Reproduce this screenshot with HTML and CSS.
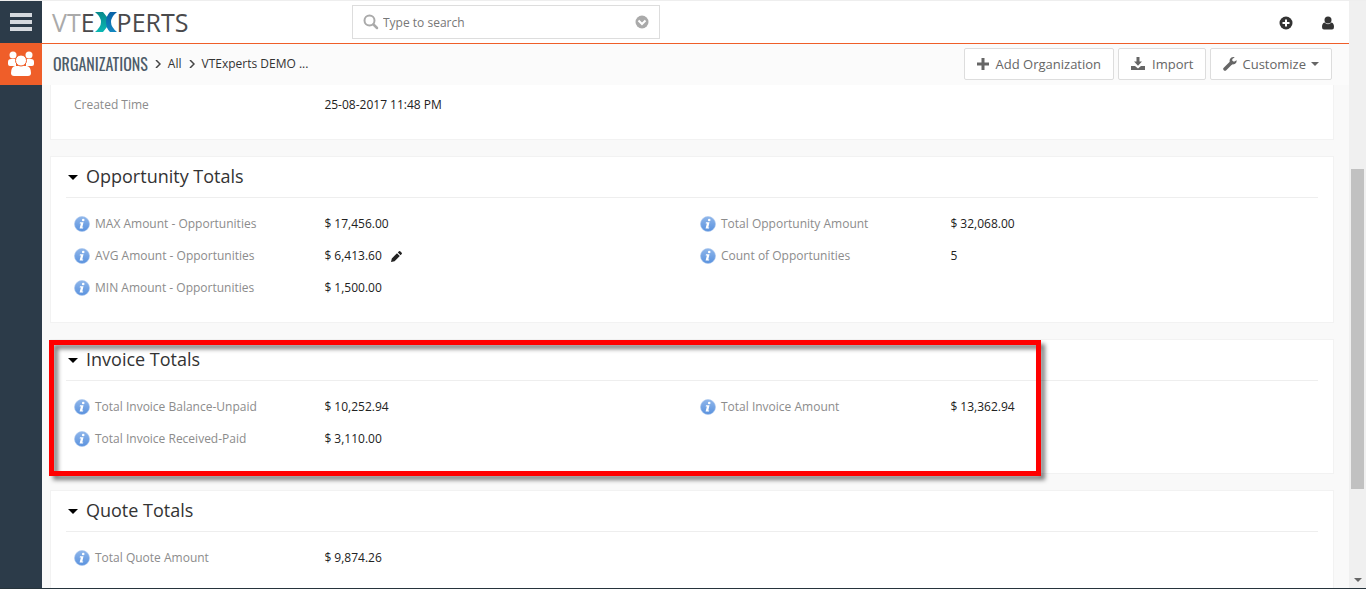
FILE: index.html
```
<!DOCTYPE html>
<html lang="en">
<head>
    <meta charset="UTF-8">
    <meta name="viewport" content="width=device-width, initial-scale=1.0">
    <title>Organizations - VTExperts</title>
    <link rel="stylesheet" href="styles.css">
</head>
<body>
    <!-- shared icons -->
    <svg class="sprite" aria-hidden="true">
        <defs>
            <linearGradient id="infoFill" x1="0" y1="0" x2="0" y2="1">
                <stop offset="0" stop-color="#8fb6ea"/>
                <stop offset="1" stop-color="#5a92de"/>
            </linearGradient>
            <linearGradient id="teal" x1="0" y1="0" x2="0" y2="1">
                <stop offset="0" stop-color="#078a8c"/>
                <stop offset="1" stop-color="#0bb8b4"/>
            </linearGradient>
            <linearGradient id="blue" x1="0" y1="0" x2="0" y2="1">
                <stop offset="0" stop-color="#0a62a6"/>
                <stop offset="1" stop-color="#1387c0"/>
            </linearGradient>
        </defs>
        <symbol id="info" viewBox="0 0 16 16">
            <circle cx="8" cy="8" r="7.5" fill="url(#infoFill)" stroke="#a9c6ee" stroke-width=".6"/>
            <circle cx="9.2" cy="4" r="1.3" fill="#fff"/>
            <path d="M6 6.300h3.500L8.300 11.400h1l-.3 1.200H5.600L6.900 7.500H5.700z" fill="#fff"/>
        </symbol>
    </svg>

    <div class="app">
        <nav class="sidebar">
            <button class="menu-btn" type="button" aria-label="Menu">
                <svg width="22" height="18" viewBox="0 0 22 18"><path d="M0 0h22v4H0zM0 7h22v4H0zM0 14h22v4H0z" fill="#d5d9de"/></svg>
            </button>
            <a class="module" href="#" aria-label="Organizations">
                <svg width="26" height="26" viewBox="0 0 26 26" fill="#fff">
                    <circle cx="5" cy="4" r="3.500"/>
                    <circle cx="21" cy="4" r="3.500"/>
                    <path d="M0 13V11Q0 8 3 8h4q1 0 1 1v6H2q-2 0-2-2zM26 13V11q0-3-3-3h-4q-1 0-1 1v6h6q2 0 2-2z"/>
                    <path d="M7 15Q3 16 3 22q0 3 3 3h14q3 0 3-3 0-6-4-7z"/>
                    <circle cx="13" cy="9.500" r="5.500" stroke="#ef5e29"/>
                </svg>
            </a>
        </nav>

        <div class="main">
            <header class="topbar">
                <a class="logo" href="#" aria-label="VTExperts"><span class="fade">VT</span><span>E</span><svg width="22" height="20" viewBox="0 0 22 20"><path d="M0 0h8l4 5v10l-4 5H0q6-5 6-10T0 0z" fill="url(#teal)"/><path d="M22 0h-7q-4 4-4 10t4 10h7q-6-5-6-10t6-10z" fill="url(#blue)"/></svg><span>PERTS</span></a>
                <form class="search">
                    <svg width="16" height="16" viewBox="0 0 16 16"><path d="M10.500 10.500L14 14" stroke="#aaa" stroke-width="2.500" stroke-linecap="round"/><circle cx="6.500" cy="6.500" r="5" fill="none" stroke="#aaa" stroke-width="2"/></svg>
                    <input type="text" placeholder="Type to search" aria-label="Search">
                    <button type="button" aria-label="Advanced search">
                        <svg width="14" height="14" viewBox="0 0 14 14"><circle cx="7" cy="7" r="6.500" fill="#aaa"/><path d="M3.500 5.500L7 9l3.500-3.500" fill="none" stroke="#fff" stroke-width="2"/></svg>
                    </button>
                </form>
                <div class="tools">
                    <button type="button" aria-label="Quick create">
                        <svg width="14" height="14" viewBox="0 0 14 14"><circle cx="7" cy="7" r="6.500" fill="#333"/><path d="M7 3.500v7M3.500 7h7" stroke="#fff" stroke-width="2"/></svg>
                    </button>
                    <button type="button" aria-label="User">
                        <svg width="14" height="14" viewBox="0 0 14 14" fill="#333"><circle cx="7" cy="4" r="3.500"/><path d="M3.500 6.500Q7 10 10.500 6.500 13 7 13 11q0 2.500-2 2.500H3Q1 13.500 1 11q0-4 2.500-4.500z"/></svg>
                    </button>
                </div>
            </header>

            <div class="subbar">
                <div class="crumbs">
                    <a class="module-name" href="#">ORGANIZATIONS</a>
                    <svg width="6" height="8" viewBox="0 0 6 8"><path d="M1 0l4 4-4 4" fill="none" stroke="#444" stroke-width="1.500"/></svg>
                    <a href="#">All</a>
                    <svg width="6" height="8" viewBox="0 0 6 8"><path d="M1 0l4 4-4 4" fill="none" stroke="#444" stroke-width="1.500"/></svg>
                    <a href="#">VTExperts DEMO ...</a>
                </div>
                <div class="actions">
                    <button type="button">
                        <svg width="12" height="12" viewBox="0 0 12 12"><path d="M6 0v12M0 6h12" stroke="#666" stroke-width="3"/></svg>
                        Add Organization
                    </button>
                    <button type="button">
                        <svg width="14" height="14" viewBox="0 0 14 14" fill="#666"><path d="M5.500 0h3v4.500H11L7 8.800 3 4.500h2.500z"/><path d="M0 9h4l3 2.500L10 9h4v4H0z"/></svg>
                        Import
                    </button>
                    <button type="button" class="tight">
                        <svg width="14" height="14" viewBox="0 0 14 14"><path d="M2 12l6-6" stroke="#666" stroke-width="3.500" stroke-linecap="round"/><path d="M13.600 3.200L11 4.800 9.300 3.800V2L11.800.3Q8.500-.5 7 2 6 4.500 7.500 6.300T11.800 7Q14 5.500 13.600 3.200z" fill="#666"/></svg>
                        Customize
                        <span class="caret"></span>
                    </button>
                </div>
            </div>

            <div class="content">
                <section class="card card-cut">
                    <table>
                        <tr>
                            <th>Created Time</th>
                            <td>25-08-2017 11:48 PM</td>
                            <th></th>
                            <td></td>
                        </tr>
                    </table>
                </section>

                <section class="card">
                    <h2><span class="arrow"></span>Opportunity Totals</h2>
                    <table>
                        <tr>
                            <th><svg class="info"><use href="#info"/></svg>MAX Amount - Opportunities</th>
                            <td>$ 17,456.00</td>
                            <th><svg class="info"><use href="#info"/></svg>Total Opportunity Amount</th>
                            <td>$ 32,068.00</td>
                        </tr>
                        <tr>
                            <th><svg class="info"><use href="#info"/></svg>AVG Amount - Opportunities</th>
                            <td>$ 6,413.60
                                <button class="edit" type="button" aria-label="Edit"><svg width="11" height="11" viewBox="0 0 11 11"><path d="M0 11l.8-3.600L6 2.200l2.800 2.800-5.200 5.200zM6.800 1.400L8 .3q.6-.5 1.200 0l1.500 1.500q.5.600 0 1.200L9.600 4.200z" fill="#222"/></svg></button>
                            </td>
                            <th><svg class="info"><use href="#info"/></svg>Count of Opportunities</th>
                            <td>5</td>
                        </tr>
                        <tr>
                            <th><svg class="info"><use href="#info"/></svg>MIN Amount - Opportunities</th>
                            <td>$ 1,500.00</td>
                            <th></th>
                            <td></td>
                        </tr>
                    </table>
                </section>

                <section class="card">
                    <h2><span class="arrow"></span>Invoice Totals</h2>
                    <table>
                        <tr>
                            <th><svg class="info"><use href="#info"/></svg>Total Invoice Balance-Unpaid</th>
                            <td>$ 10,252.94</td>
                            <th><svg class="info"><use href="#info"/></svg>Total Invoice Amount</th>
                            <td>$ 13,362.94</td>
                        </tr>
                        <tr>
                            <th><svg class="info"><use href="#info"/></svg>Total Invoice Received-Paid</th>
                            <td>$ 3,110.00</td>
                            <th></th>
                            <td></td>
                        </tr>
                    </table>
                    <div class="highlight"></div>
                </section>

                <section class="card">
                    <h2><span class="arrow"></span>Quote Totals</h2>
                    <table>
                        <tr>
                            <th><svg class="info"><use href="#info"/></svg>Total Quote Amount</th>
                            <td>$ 9,874.26</td>
                            <th></th>
                            <td></td>
                        </tr>
                    </table>
                </section>
            </div>
        </div>

        <div class="scrollbar">
            <div class="thumb"></div>
            <span class="caret"></span>
        </div>
    </div>
</body>
</html>
```

FILE: styles.css
```
* {
    box-sizing: border-box;
}
body {
    margin: 0;
    font-family: "Open Sans", "Noto Sans", sans-serif;
    font-size: 12px;
    color: #222;
    background-color: #f9f9f9;
}
a {
    color: inherit;
    text-decoration: none;
}
button {
    padding: 0;
    border: none;
    background: none;
    font-family: inherit;
    cursor: pointer;
}
svg {
    display: block;
    flex: none;
}
.sprite {
    position: absolute;
    width: 0;
    height: 0;
}
.app {
    display: flex;
    height: 100vh;
    overflow: hidden;
    border-top: 1px solid #eee;
    border-bottom: 1px solid #27343c;
}

/* sidebar */
.sidebar {
    width: 42px;
    flex: none;
    background-color: #2c3b49;
}
.menu-btn, .module {
    display: flex;
    align-items: center;
    justify-content: center;
    width: 100%;
    height: 42px;
}
.module {
    background-color: #ef5e29;
}

/* header */
.main {
    flex: 1;
    min-width: 0;
    display: flex;
    flex-direction: column;
}
.topbar {
    display: flex;
    flex: none;
    align-items: center;
    height: 43px;
    padding: 0 14px 0 10px;
    background-color: #fff;
    border-bottom: 1px solid #ef5e29;
}
.logo {
    display: flex;
    align-items: center;
    width: 300px;
    font-family: "Open Sans", sans-serif;
    font-size: 25px;
    font-weight: 400;
    color: #4a4a4c;
}
.logo .fade {
    color: #aaa;
}
.search {
    display: flex;
    align-items: center;
    width: 308px;
    height: 34px;
    padding: 0 10px;
    border: 1px solid #ddd;
}
.search input {
    flex: 1;
    min-width: 0;
    padding: 0 4px;
    border: none;
    outline: none;
    font-family: inherit;
    font-size: 12px;
}
.search input::placeholder {
    color: #777;
}
.tools {
    display: flex;
    gap: 28px;
    margin-left: auto;
    padding-top: 2px;
}

/* breadcrumbs and actions */
.subbar {
    display: flex;
    flex: none;
    align-items: center;
    justify-content: space-between;
    height: 41px;
    padding: 0 17px 2px 11px;
    background-color: #fbfbfb;
}
.crumbs {
    display: flex;
    align-items: center;
    gap: 7px;
    color: #333;
}
.module-name {
    font-family: "Oswald", "Liberation Sans Narrow", "Roboto Condensed", sans-serif;
    font-size: 16px;
    line-height: 20px;
    color: #4d5c69;
}
.actions {
    display: flex;
    gap: 4px;
}
.actions button {
    display: flex;
    align-items: center;
    gap: 7px;
    height: 32px;
    padding: 0 12px;
    border: 1px solid #ddd;
    border-radius: 2px;
    background-color: #fff;
    font-size: 13px;
    color: #666;
}
.actions .tight {
    gap: 5px;
}
.caret {
    border: 4px solid transparent;
    border-top-color: #666;
    border-bottom: none;
}

/* detail blocks */
.content {
    display: flex;
    flex: 1;
    flex-direction: column;
    gap: 16px;
    min-height: 0;
    padding: 0 15px 0 8px;
    overflow: hidden;
}
.card {
    position: relative;
    flex: none;
    padding: 0 15px 18px;
    border: 1px solid #f2f2f2;
    background-color: #fff;
}
.card-cut {
    padding-top: 4px;
    border-top: none;
}
.card h2 {
    display: flex;
    align-items: center;
    gap: 8px;
    height: 41px;
    margin: 0 0 10px;
    padding: 0 0 2px 2px;
    border-bottom: 1px solid #eee;
    font-size: 18px;
    font-weight: 400;
    color: #333;
}
.arrow {
    margin-top: 3px;
    border: 5px solid transparent;
    border-top-color: #000;
    border-bottom: none;
}
table {
    width: 100%;
    table-layout: fixed;
    border-collapse: collapse;
}
th, td {
    height: 32px;
    padding: 0 0 2px 8px;
    text-align: left;
    font-weight: 400;
    white-space: nowrap;
}
th {
    width: 20%;
    color: #8c8c8c;
}
td {
    width: 30%;
}
.info {
    display: inline-block;
    width: 16px;
    height: 16px;
    margin-right: 5px;
    vertical-align: -4px;
}
.edit {
    margin-left: 6px;
    vertical-align: middle;
}
.highlight {
    position: absolute;
    top: 0;
    left: -2px;
    right: 292px;
    bottom: -3px;
    border: 5px solid #f00;
    filter: drop-shadow(4px 4px 2px rgba(0, 0, 0, 0.5));
}

/* scrollbar */
.scrollbar {
    display: grid;
    flex: none;
    grid-template-rows: 168fr 320fr 82fr 17px;
    justify-items: center;
    width: 17px;
    background-color: #f0f0f0;
}
.thumb {
    grid-row: 2;
    width: 13px;
    background-color: #c1c1c1;
}
.scrollbar .caret {
    grid-row: 4;
    align-self: center;
}
```
